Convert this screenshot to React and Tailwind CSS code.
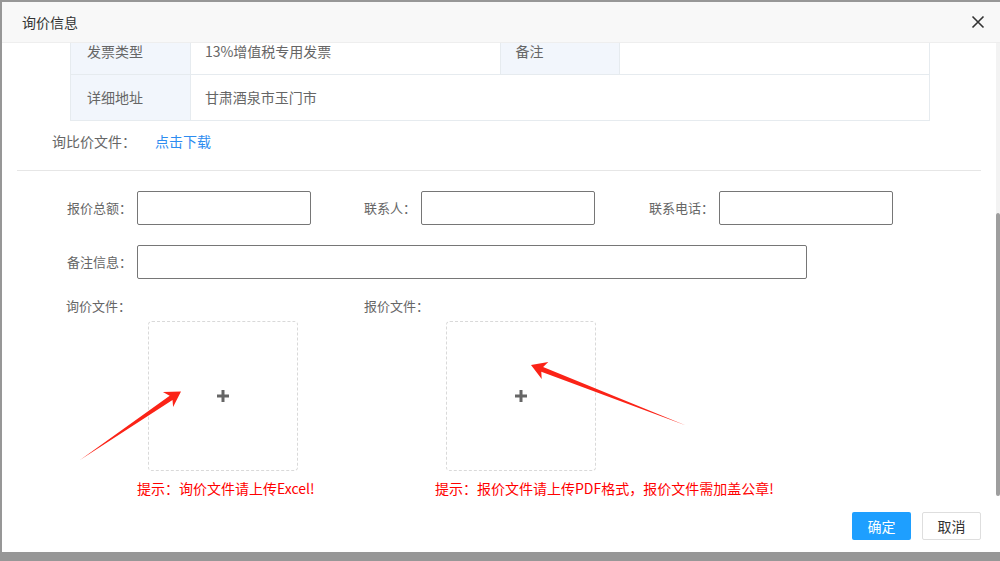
import React from "react";

function Plus() {
  return (
    <svg width="12" height="12" viewBox="0 0 12 12">
      <rect x="4.5" y="0" width="3" height="12" fill="#666" />
      <rect x="0" y="4.5" width="12" height="3" fill="#666" />
    </svg>
  );
}

function UploadCol({ label, hint }) {
  return (
    <div className="w-[298px] flex flex-col">
      <div className="h-[20px] leading-[20px] text-[13px] text-[#666]">{label}</div>
      <div className="mt-[5px] ml-[82px] w-[150px] h-[150px] border border-dashed border-[#d9d9d9] rounded-[4px] flex items-center justify-center">
        <Plus />
      </div>
      <div className="mt-[7px] ml-[71px] h-[20px] leading-[20px] text-[14px] text-[#ff0000] whitespace-nowrap">{hint}</div>
    </div>
  );
}

export default function App() {
  return (
    <div className="relative w-[1000px] h-[561px] overflow-hidden bg-[#979797] font-['Noto_Sans_CJK_SC',sans-serif]">
      <div className="ml-[2px] pt-[2px]">
        <div className="w-[998px] h-[550px] bg-white flex flex-col">
          {/* header */}
          <div className="h-[41px] shrink-0 bg-[#f8f8f8] border-b border-[#eeeeee] flex items-center justify-between pl-[20px] pr-[15px]">
            <span className="text-[14px] text-[#333]">询价信息</span>
            <svg width="14" height="14" viewBox="0 0 14 14">
              <path d="M1.5 1.5 L12.5 12.5 M12.5 1.5 L1.5 12.5" stroke="#333" strokeWidth="1.6" fill="none" />
            </svg>
          </div>
          {/* body */}
          <div className="flex-1 flex min-h-0">
            <div className="flex-1 overflow-hidden">
              {/* table */}
              <div className="mt-[-15px] ml-[68px] w-[860px] border-t border-l border-[#e6ebef] text-[14px] text-[#666]">
                <div className="flex h-[46px] border-b border-[#e6ebef]">
                  <div className="w-[120px] border-r border-[#e6ebef] bg-[#f2f6fc] flex items-center pl-[16px]">发票类型</div>
                  <div className="w-[310px] border-r border-[#e6ebef] flex items-center pl-[14px]">13%增值税专用发票</div>
                  <div className="w-[120px] border-r border-[#e6ebef] bg-[#f2f6fc] flex items-center pl-[15px]">备注</div>
                  <div className="w-[310px] border-r border-[#e6ebef]"></div>
                </div>
                <div className="flex h-[46px] border-b border-[#e6ebef]">
                  <div className="w-[120px] border-r border-[#e6ebef] bg-[#f2f6fc] flex items-center pl-[16px]">详细地址</div>
                  <div className="w-[740px] border-r border-[#e6ebef] flex items-center pl-[14px]">甘肃酒泉市玉门市</div>
                </div>
              </div>
              {/* file row */}
              <div className="h-[40px] flex items-center pl-[50px] text-[14px]">
                <span className="w-[103px] text-[#666]">询比价文件：</span>
                <span className="text-[#2d8cf0]">点击下载</span>
              </div>
              <div className="mt-[9px] ml-[15px] w-[964px] h-px bg-[#e6e6e6]"></div>
              {/* form row 1 */}
              <div className="mt-[20px] flex items-center h-[34px] pl-[50px] text-[13px] text-[#666]">
                <span className="w-[83px] pr-[3px] text-right">报价总额：</span>
                <input className="ml-[2px] w-[174px] h-[34px] border border-[#767676] rounded-[2px] bg-white" />
                <span className="ml-[25px] w-[83px] pr-[3px] text-right">联系人：</span>
                <input className="ml-[2px] w-[174px] h-[34px] border border-[#767676] rounded-[2px] bg-white" />
                <span className="ml-[39px] w-[83px] pr-[3px] text-right">联系电话：</span>
                <input className="ml-[2px] w-[174px] h-[34px] border border-[#767676] rounded-[2px] bg-white" />
              </div>
              {/* form row 2 */}
              <div className="mt-[20px] flex items-center h-[34px] pl-[50px] text-[13px] text-[#666]">
                <span className="w-[83px] pr-[3px] text-right">备注信息：</span>
                <input className="ml-[2px] w-[670px] h-[34px] border border-[#767676] rounded-[2px] bg-white" />
              </div>
              {/* uploads */}
              <div className="mt-[17px] flex pl-[64px]">
                <UploadCol label="询价文件：" hint="提示：询价文件请上传Excel!" />
                <UploadCol label="报价文件：" hint="提示：报价文件请上传PDF格式，报价文件需加盖公章!" />
              </div>
            </div>
            {/* scrollbar */}
            <div className="w-[4px] flex flex-col">
              <div className="h-[170px] bg-[#f3f3f3]"></div>
              <div className="h-[283px] bg-[#9e9e9e] rounded-[2px]"></div>
            </div>
          </div>
          {/* footer */}
          <div className="h-[55px] shrink-0 flex justify-end items-start pt-[15px] pr-[19px] gap-[11px]">
            <button className="w-[59px] h-[28px] bg-[#1e9fff] text-white text-[14px] rounded-[2px]">确定</button>
            <button className="w-[59px] h-[28px] bg-white border border-[#dedede] text-[#333] text-[14px] rounded-[2px]">取消</button>
          </div>
        </div>
      </div>
      {/* annotation arrows */}
      <svg className="absolute left-0 top-0 pointer-events-none" width="1000" height="561">
        <polygon
          points="80,460 172.5,399.9 173.1,406.9 181,391.5 162.9,392.1 169.7,395.7"
          fill="#fb2317"
        />
        <polygon
          points="686,425.5 543.1,367.1 548.3,362.1 531,365 541.7,378.9 541.3,371.7"
          fill="#fb2317"
        />
      </svg>
    </div>
  );
}
